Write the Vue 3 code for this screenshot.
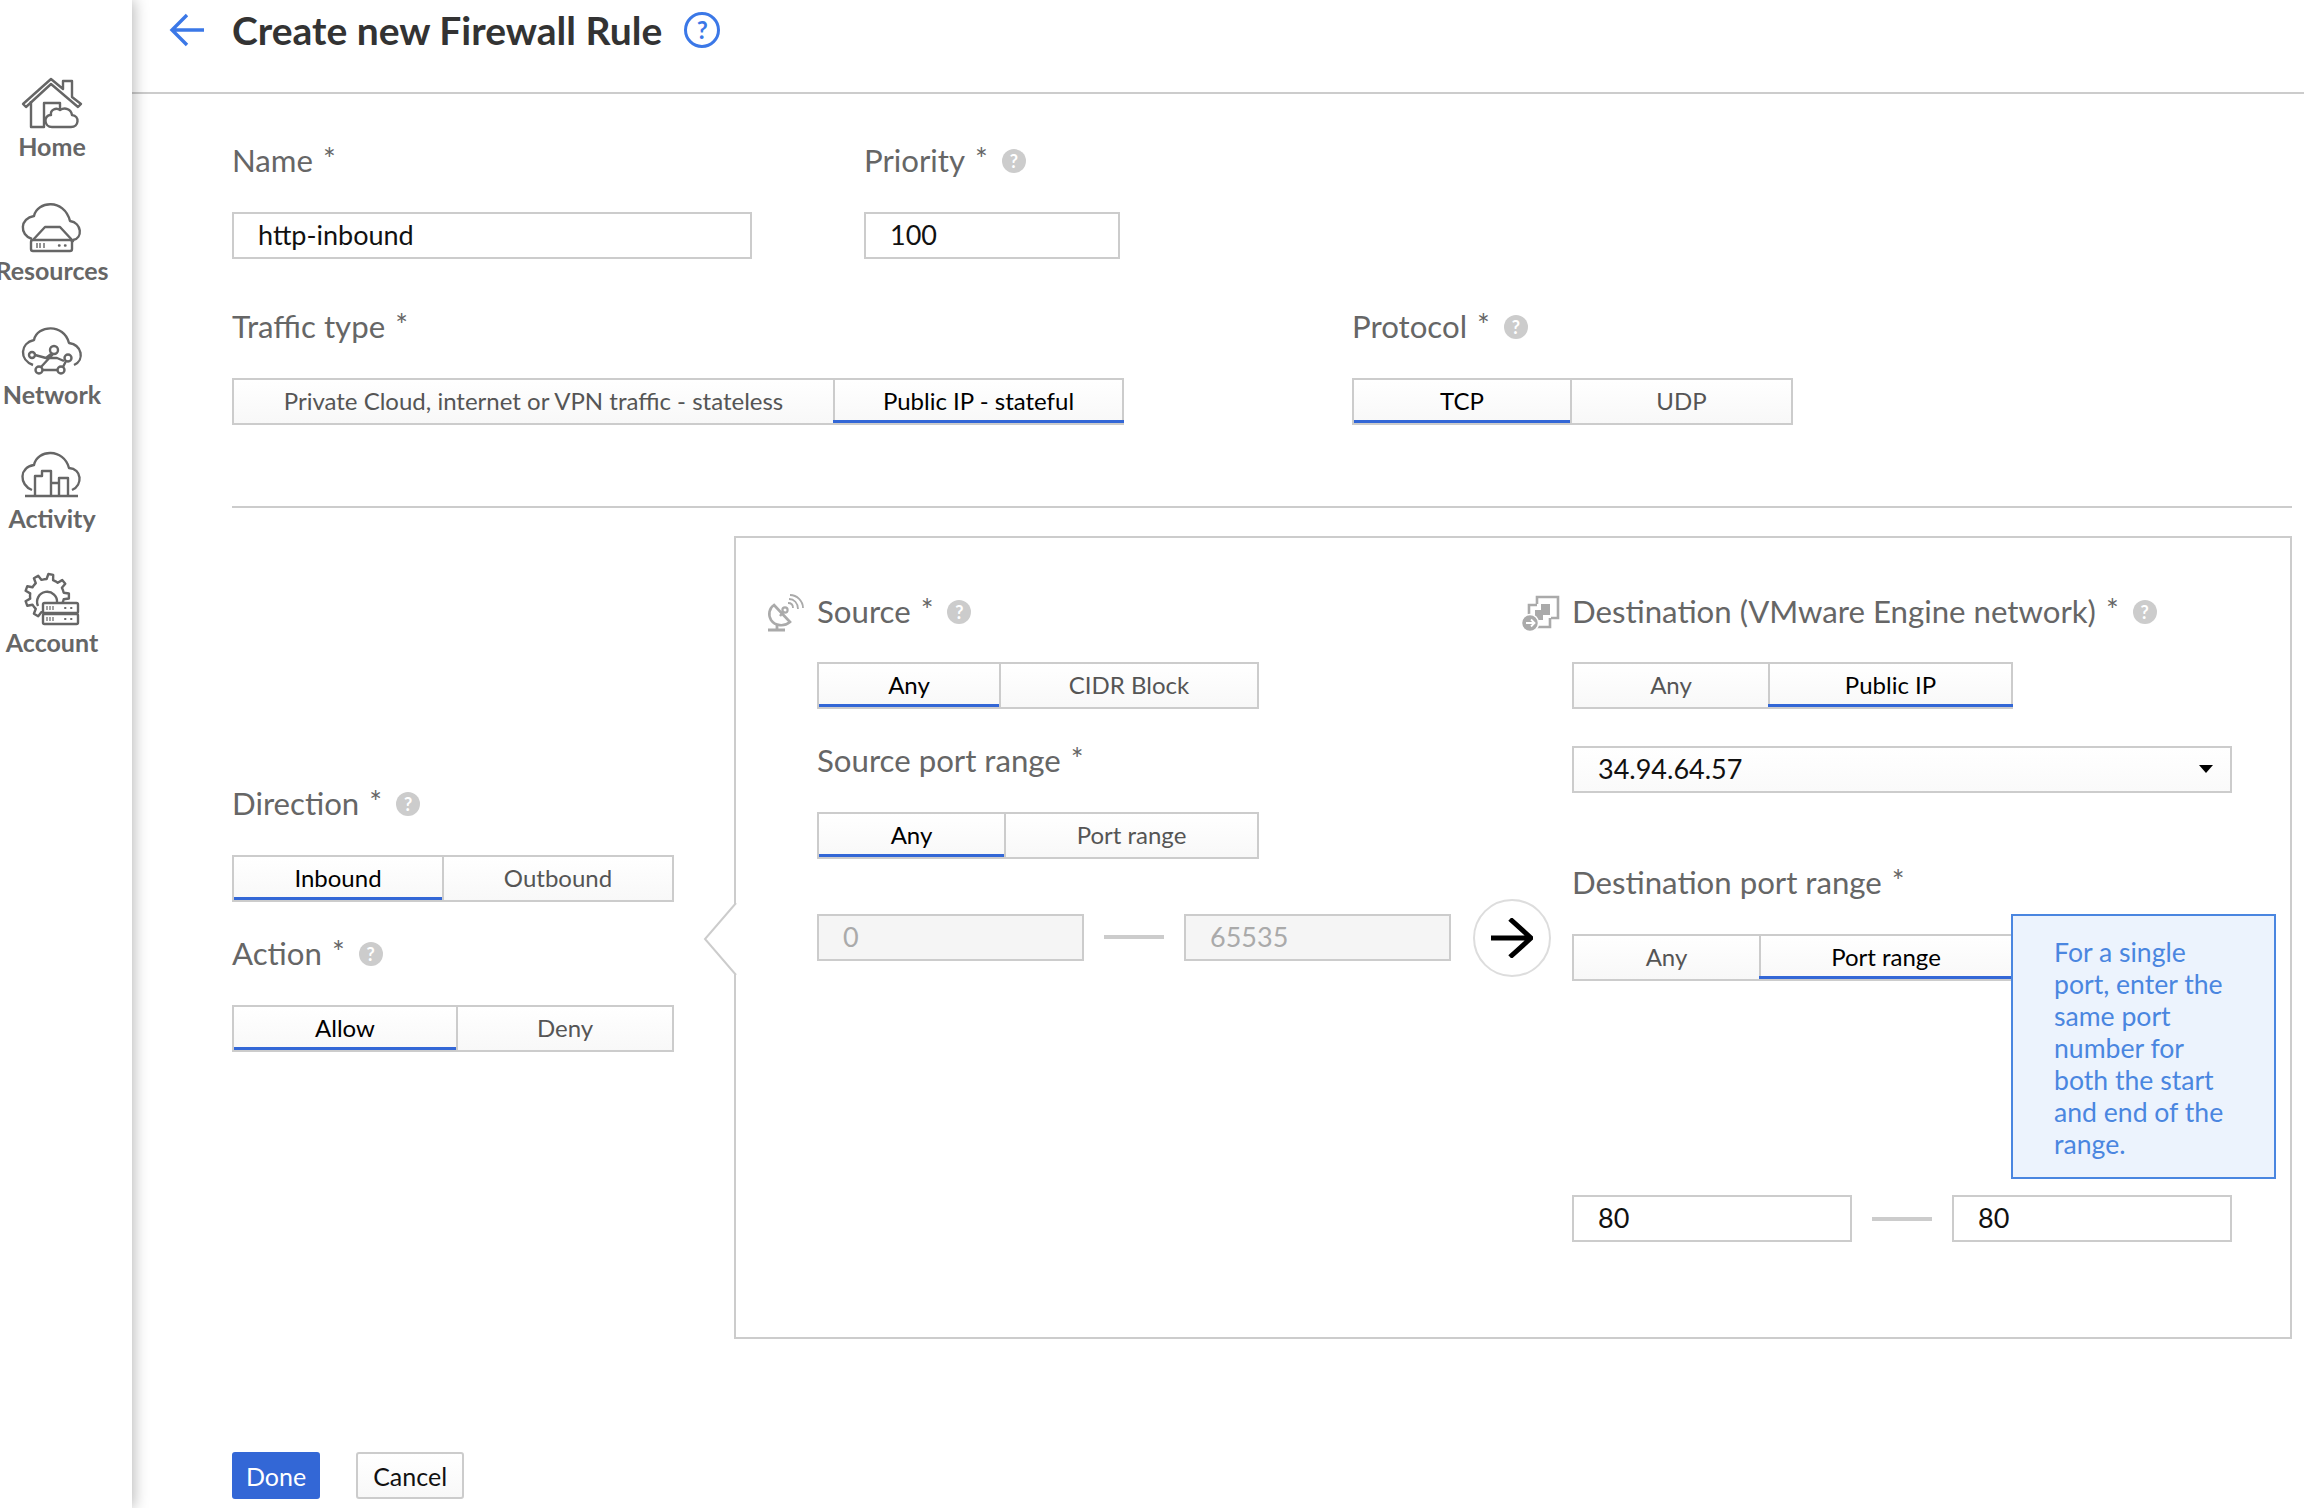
<script setup>
const navItems = ['Home', 'Resources', 'Network', 'Activity', 'Account']

const tabs = {
  traffic: [
    { label: 'Private Cloud, internet or VPN traffic - stateless', width: 601 },
    { label: 'Public IP - stateful', width: 291, active: true }
  ],
  protocol: [
    { label: 'TCP', width: 218, active: true },
    { label: 'UDP', width: 223 }
  ],
  direction: [
    { label: 'Inbound', width: 210, active: true },
    { label: 'Outbound', width: 232 }
  ],
  action: [
    { label: 'Allow', width: 224, active: true },
    { label: 'Deny', width: 218 }
  ],
  source: [
    { label: 'Any', width: 182, active: true },
    { label: 'CIDR Block', width: 260 }
  ],
  sourcePort: [
    { label: 'Any', width: 187, active: true },
    { label: 'Port range', width: 255 }
  ],
  dest: [
    { label: 'Any', width: 196 },
    { label: 'Public IP', width: 245, active: true }
  ],
  destPort: [
    { label: 'Any', width: 187 },
    { label: 'Port range', width: 254, active: true }
  ]
}

// gear outline for the account icon
const gearPath = (cx, cy, outer, inner, teeth) => {
  const pts = []
  const step = (Math.PI * 2) / teeth
  for (let i = 0; i < teeth; i++) {
    const a = i * step
    const corners = [
      [inner, a - step * 0.5],
      [inner, a - step * 0.28],
      [outer, a - step * 0.16],
      [outer, a + step * 0.16],
      [inner, a + step * 0.28]
    ]
    corners.forEach(([r, t]) => {
      pts.push(`${(cx + r * Math.cos(t)).toFixed(1)} ${(cy + r * Math.sin(t)).toFixed(1)}`)
    })
  }
  return 'M' + pts.join(' L') + ' Z'
}
</script>

<template>
  <div class="page">
    <aside class="sidebar">
      <div v-for="item in navItems" :key="item" class="nav-item">
        <svg v-if="item === 'Home'" class="nav-icon" viewBox="22 76 62 54">
          <path d="M24 104 L52 79 L64 89 V81 H73 V97 L82 104 L79 107 L52 84 L27 107 Z" />
          <path d="M32 101 V127 H45 V103 H61 V110" />
          <path fill="#fff" d="M53 127 H72 C80 127 81 116 73 115 C72 109 66 107 61 110 C57 107 51 110 52 115 C44 115 45 127 53 127 Z" />
        </svg>
        <svg v-else-if="item === 'Resources'" class="nav-icon" viewBox="22 200 62 54">
          <path d="M33 239 C20 235 21 218 35 216 C38 201 65 198 71 221 C83 223 84 238 74 240" />
          <path fill="#fff" d="M33 241 L46 227 H61 L74 241 Z" />
          <rect x="32" y="240" width="41" height="11" rx="2" fill="#fff" />
          <path stroke-width="1.4" d="M38 243 V248 M41 243 V248 M45 243 V248" />
          <path stroke-width="2.4" stroke-linecap="round" d="M60 245.5 H60.5 M66 245.5 H66.5" />
        </svg>
        <svg v-else-if="item === 'Network'" class="nav-icon" viewBox="22 324 62 54">
          <path d="M34 365 C20 360 21 343 35 340 C38 325 65 323 70 343 C83 345 86 360 75 365" />
          <path d="M36 355 L47 358 L52 354 M42 367 L54 354 M46 358 L58 358 L65 361 M64 367 L67 361 M43 370 H59" />
          <circle cx="55" cy="350" r="4" fill="#fff" />
          <circle cx="33" cy="355" r="3" fill="#fff" />
          <circle cx="40" cy="370" r="3.5" fill="#fff" />
          <circle cx="62" cy="370" r="3.5" fill="#fff" />
          <circle cx="69" cy="358" r="3.5" fill="#fff" />
        </svg>
        <svg v-else-if="item === 'Activity'" class="nav-icon" viewBox="22 448 62 54">
          <path d="M33 490 C20 485 20 467 35 465 C38 449 65 448 70 468 C83 469 84 485 73 490" />
          <path fill="#fff" d="M36 495 V476 H43 V471 H52 V495 M52 495 V483 H60 V495 M60 495 V478 H69 V495" />
          <path stroke-width="2.6" d="M26 496 H79" />
        </svg>
        <svg v-else class="nav-icon" viewBox="22 572 62 54">
          <path :d="gearPath(48, 596, 22, 17, 9)" />
          <path d="M39 606 A10 10 0 1 1 58 603" />
          <rect x="44" y="603" width="35" height="10" rx="1.5" fill="#fff" />
          <rect x="44" y="614" width="35" height="10" rx="1.5" fill="#fff" />
          <path stroke-width="1.2" d="M48 606 V610 M51 606 V610 M54 606 V610 M48 617 V621 M51 617 V621 M54 617 V621" />
          <path stroke-width="2" stroke-linecap="round" d="M66 608 H66.5 M72 608 H72.5 M66 619 H66.5 M72 619 H72.5" />
        </svg>
        <span class="nav-label">{{ item }}</span>
      </div>
    </aside>

    <main class="main">
      <header class="topbar">
        <svg class="back" viewBox="0 0 36 34">
          <path d="M18 2 L3 17 L18 32 M3 17 H35" />
        </svg>
        <h1 class="title">Create new Firewall Rule</h1>
        <span class="title-help">?</span>
      </header>

      <div class="form">
        <div class="row first-row">
          <div class="name-field">
            <div class="label">Name<span class="star">*</span></div>
            <input class="input name-input" value="http-inbound" readonly />
          </div>
          <div>
            <div class="label">Priority<span class="star">*</span><span class="help">?</span></div>
            <input class="input priority-input" value="100" readonly />
          </div>
        </div>

        <div class="row second-row">
          <div class="traffic-field">
            <div class="label">Traffic type<span class="star">*</span></div>
            <div class="seg">
              <div v-for="t in tabs.traffic" :key="t.label" class="seg-item" :class="{ active: t.active }" :style="{ width: t.width + 'px' }">{{ t.label }}</div>
            </div>
          </div>
          <div>
            <div class="label">Protocol<span class="star">*</span><span class="help">?</span></div>
            <div class="seg">
              <div v-for="t in tabs.protocol" :key="t.label" class="seg-item" :class="{ active: t.active }" :style="{ width: t.width + 'px' }">{{ t.label }}</div>
            </div>
          </div>
        </div>

        <div class="divider"></div>

        <div class="lower">
          <div class="left-col">
            <div class="label">Direction<span class="star">*</span><span class="help">?</span></div>
            <div class="seg">
              <div v-for="t in tabs.direction" :key="t.label" class="seg-item" :class="{ active: t.active }" :style="{ width: t.width + 'px' }">{{ t.label }}</div>
            </div>
            <div class="label action-label">Action<span class="star">*</span><span class="help">?</span></div>
            <div class="seg">
              <div v-for="t in tabs.action" :key="t.label" class="seg-item" :class="{ active: t.active }" :style="{ width: t.width + 'px' }">{{ t.label }}</div>
            </div>
          </div>

          <section class="panel">
            <svg class="notch" viewBox="0 0 34 72">
              <path d="M33 0 L2 36 L33 72" />
            </svg>

            <div class="source-col">
              <div class="panel-head">
                <svg class="head-icon" viewBox="0 0 37 40">
                  <path stroke-width="2.6" d="M8 14 L24 31 C18 36 9 35 5 29 C2 24 3 17 8 14 Z" />
                  <path stroke-width="2.4" d="M14 25 L18 20" />
                  <circle cx="19" cy="19" r="2.6" stroke-width="2.2" />
                  <path stroke-width="1.8" d="M22 12 C25 12 27 14 27 17 M23 8 C28 8 32 12 32 18 M24 4 C31 4 37 10 37 17" />
                  <path stroke-width="2.8" d="M11 34 V38 M2 39 H19" />
                </svg>
                <div class="label">Source<span class="star">*</span><span class="help">?</span></div>
              </div>
              <div class="seg">
                <div v-for="t in tabs.source" :key="t.label" class="seg-item" :class="{ active: t.active }" :style="{ width: t.width + 'px' }">{{ t.label }}</div>
              </div>
              <div class="label port-label">Source port range<span class="star">*</span></div>
              <div class="seg">
                <div v-for="t in tabs.sourcePort" :key="t.label" class="seg-item" :class="{ active: t.active }" :style="{ width: t.width + 'px' }">{{ t.label }}</div>
              </div>
              <div class="range source-range">
                <input class="input port-input disabled" value="0" readonly />
                <span class="dash"></span>
                <input class="input port-input disabled" value="65535" readonly />
                <div class="go">
                  <svg viewBox="0 0 42 40">
                    <path d="M19 1 L40 20 L19 39 M0 20 H40" />
                  </svg>
                </div>
              </div>
            </div>

            <div class="dest-col">
              <div class="panel-head">
                <svg class="head-icon dest-icon" viewBox="0 0 37 40">
                  <path stroke-width="2.6" d="M16 13 V6 H37 V27 H30" />
                  <path stroke-width="2.6" d="M8 24 V14 H16 M16 36 H29 V27" />
                  <path fill="#aaa" stroke="none" d="M20 13 H29 V24 H22 V29 H14 V19 H20 Z" />
                  <circle cx="9" cy="32" r="8.5" fill="#aaa" stroke="#fff" stroke-width="1.5" />
                  <path stroke="#fff" stroke-width="1.8" d="M5 32 H13 M10 28.5 L13.5 32 L10 35.5" />
                </svg>
                <div class="label">Destination (VMware Engine network)<span class="star">*</span><span class="help">?</span></div>
              </div>
              <div class="seg">
                <div v-for="t in tabs.dest" :key="t.label" class="seg-item" :class="{ active: t.active }" :style="{ width: t.width + 'px' }">{{ t.label }}</div>
              </div>
              <div class="select">
                <span>34.94.64.57</span>
                <span class="caret"></span>
              </div>
              <div class="label dest-port-label">Destination port range<span class="star">*</span></div>
              <div class="dest-port">
                <div class="seg">
                  <div v-for="t in tabs.destPort" :key="t.label" class="seg-item" :class="{ active: t.active }" :style="{ width: t.width + 'px' }">{{ t.label }}</div>
                </div>
                <div class="tip">For a single port, enter the same port number for both the start and end of the range.</div>
              </div>
              <div class="range dest-range">
                <input class="input dest-input" value="80" readonly />
                <span class="dash"></span>
                <input class="input dest-input" value="80" readonly />
              </div>
            </div>
          </section>
        </div>

        <div class="actions">
          <button class="btn primary">Done</button>
          <button class="btn">Cancel</button>
        </div>
      </div>
    </main>
  </div>
</template>

<style>
html, body {
  margin: 0;
  background: #fff;
}
</style>

<style scoped>
.page {
  display: flex;
  width: 2304px;
  height: 1508px;
  overflow: hidden;
  font-family: Lato, "Open Sans", sans-serif;
  background: #fff;
}
.sidebar {
  width: 132px;
  flex-shrink: 0;
  box-sizing: border-box;
  padding: 76px 0 0;
  background: #fff;
  box-shadow: 2px 0 14px rgba(0, 0, 0, 0.28);
  position: relative;
  z-index: 2;
}
.nav-item {
  width: 104px;
  height: 124px;
  display: flex;
  flex-direction: column;
  align-items: center;
}
.nav-icon {
  width: 62px;
  height: 54px;
  flex-shrink: 0;
  fill: none;
  stroke: #666;
  stroke-width: 2.4;
  stroke-linejoin: round;
}
.nav-label {
  margin-top: 2px;
  font-size: 25px;
  line-height: 28px;
  font-weight: 700;
  color: #666;
  white-space: nowrap;
}
.main {
  flex: 1;
  min-width: 0;
}
.topbar {
  height: 94px;
  box-sizing: border-box;
  border-bottom: 2px solid #ccc;
  display: flex;
  align-items: flex-start;
  padding: 0 0 0 37px;
}
.back {
  width: 36px;
  height: 34px;
  margin-top: 13px;
  fill: none;
  stroke: #3b78e7;
  stroke-width: 3.4;
}
.title {
  margin: 0 0 0 27px;
  font-size: 39px;
  line-height: 60px;
  font-weight: 700;
  color: #333;
  white-space: nowrap;
}
.title-help {
  width: 36px;
  height: 36px;
  box-sizing: border-box;
  margin: 12px 0 0 22px;
  border: 3px solid #3b78e7;
  border-radius: 50%;
  color: #3b78e7;
  font-size: 24px;
  font-weight: 700;
  line-height: 30px;
  text-align: center;
}
.form {
  padding: 44px 12px 0 100px;
}
.row {
  display: flex;
}
.name-field {
  width: 632px;
}
.second-row {
  margin-top: 45px;
}
.traffic-field {
  width: 1120px;
}
.label {
  height: 44px;
  line-height: 44px;
  font-size: 31.2px;
  color: #666;
  white-space: nowrap;
  margin-bottom: 30px;
  display: flex;
  align-items: center;
}
.star {
  font-size: 30px;
  margin-left: 10px;
  position: relative;
  top: -2px;
}
.help {
  width: 24px;
  height: 24px;
  margin: 2px 0 0 14px;
  border-radius: 50%;
  background: #ccc;
  color: #fff;
  font-size: 18px;
  line-height: 24px;
  font-weight: 700;
  text-align: center;
}
.input {
  display: block;
  box-sizing: border-box;
  height: 47px;
  border: 2px solid #ccc;
  background: #fff;
  padding: 0 0 2px 24px;
  font-family: inherit;
  font-size: 27px;
  color: #111;
  outline: none;
  border-radius: 0;
}
.name-input {
  width: 520px;
}
.priority-input {
  width: 256px;
}
.seg {
  display: flex;
  height: 47px;
  box-sizing: border-box;
  width: max-content;
  border: 2px solid #ccc;
  background: linear-gradient(#fff, #f8f8f8);
}
.seg-item {
  box-sizing: border-box;
  margin-right: -2px;
  border-right: 2px solid #ccc;
  font-size: 24px;
  line-height: 42px;
  color: #555;
  text-align: center;
  white-space: nowrap;
}
.seg-item:last-child {
  border-right: 0;
}
.seg-item.active {
  color: #000;
  box-shadow: inset 0 -3px 0 #3367d6;
}
.divider {
  height: 2px;
  background: #ccc;
  margin-top: 81px;
}
.lower {
  display: flex;
  margin-top: 28px;
}
.left-col {
  width: 502px;
  flex-shrink: 0;
  padding-top: 245px;
}
.action-label {
  margin-top: 29px;
  margin-bottom: 30px;
}
.panel {
  width: 1558px;
  height: 803px;
  box-sizing: border-box;
  border: 2px solid #ccc;
  display: flex;
  padding: 51px 0 0 81px;
  position: relative;
}
.notch {
  position: absolute;
  left: -33px;
  top: 365px;
  width: 34px;
  height: 72px;
  fill: #fff;
  stroke: #ccc;
  stroke-width: 2;
}
.source-col {
  width: 755px;
  flex-shrink: 0;
}
.panel-head {
  display: flex;
  margin-left: -51px;
  height: 44px;
  margin-bottom: 29px;
}
.head-icon {
  width: 37px;
  height: 40px;
  margin: 2px 14px 0 0;
  flex-shrink: 0;
  fill: none;
  stroke: #aaa;
  stroke-width: 2;
  overflow: visible;
}
.port-label {
  margin-top: 29px;
}
.range {
  display: flex;
  align-items: center;
}
.source-range {
  margin-top: 38px;
}
.port-input {
  width: 267px;
}
.disabled {
  background: #f5f5f5;
  color: #aaa;
}
.dash {
  width: 60px;
  height: 4px;
  margin: 0 20px;
  background: #ccc;
  flex-shrink: 0;
}
.go {
  width: 78px;
  height: 78px;
  box-sizing: border-box;
  flex-shrink: 0;
  margin: 2px 0 0 22px;
  border: 2.5px solid #ddd;
  border-radius: 50%;
  display: flex;
  align-items: center;
  justify-content: center;
}
.go svg {
  width: 42px;
  height: 40px;
  fill: none;
  stroke: #000;
  stroke-width: 5;
}
.select {
  width: 660px;
  height: 47px;
  box-sizing: border-box;
  margin-top: 37px;
  border: 2px solid #ccc;
  padding: 0 17px 2px 24px;
  display: flex;
  align-items: center;
  justify-content: space-between;
  font-size: 27px;
  color: #111;
  background: linear-gradient(#fff, #fafafa);
}
.caret {
  width: 0;
  height: 0;
  border-left: 7px solid transparent;
  border-right: 7px solid transparent;
  border-top: 8px solid #000;
}
.dest-port-label {
  margin-top: 67px;
  margin-bottom: 30px;
}
.dest-port {
  position: relative;
  height: 47px;
}
.tip {
  position: absolute;
  left: 439px;
  top: -20px;
  width: 265px;
  height: 265px;
  box-sizing: border-box;
  padding: 20px 36px 0 41px;
  border: 2px solid #4a86e0;
  background: #ecf3fd;
  color: #4a86e0;
  font-size: 26.6px;
  line-height: 32px;
}
.dest-range {
  margin-top: 214px;
}
.dest-input {
  width: 280px;
  color: #111;
}
.actions {
  display: flex;
  gap: 36px;
  margin-top: 113px;
}
.btn {
  height: 47px;
  box-sizing: border-box;
  padding: 0 15px;
  font-family: inherit;
  font-size: 25px;
  border: 2px solid #ccc;
  border-radius: 3px;
  background: linear-gradient(#fff, #f8f8f8);
  color: #111;
}
.btn.primary {
  padding: 0 12px;
  background: #3367d6;
  border-color: #3367d6;
  color: #fff;
}
</style>
